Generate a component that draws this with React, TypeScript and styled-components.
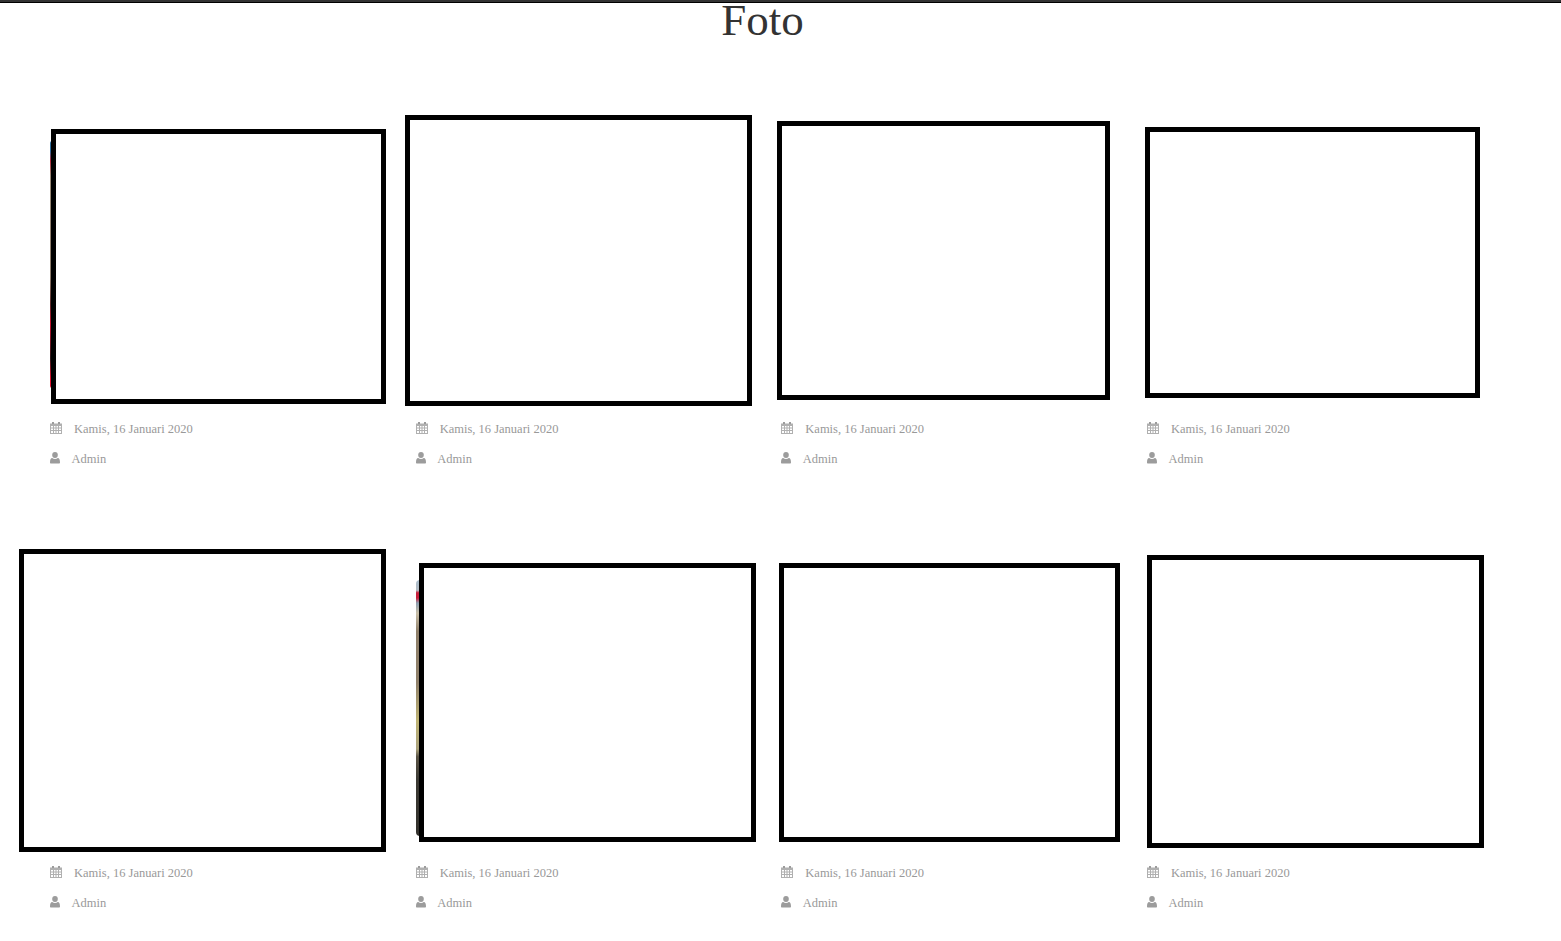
import { createGlobalStyle, styled } from 'styled-components'

const GlobalStyle = createGlobalStyle`
  html, body {
    margin: 0;
    padding: 0;
    background: #fff;
    font-family: "Liberation Serif", "Times New Roman", serif;
  }
`

const TopBar = styled.div`
  height: 2px;
  background: #333;
  border-bottom: 1px solid #000;
`

const Title = styled.h1`
  width: 1525px;
  height: 37px;
  margin: 0;
  font-size: 45px;
  font-weight: 400;
  line-height: 35px;
  text-align: center;
  color: #333;
`

const Gallery = styled.div`
  display: grid;
  grid-template-columns: repeat(4, 365.67px);
  width: 1463px;
  margin-left: 35px;
  padding-top: 75px;
  row-gap: 76px;
`

const Card = styled.article`
  padding: 0 15px;
`

const Slot = styled.div<{ $h: number }>`
  position: relative;
  display: flow-root;
  height: ${(p) => p.$h}px;
`

const Frame = styled.div<{ $w: number; $h: number; $left: number; $top: number }>`
  position: relative;
  box-sizing: border-box;
  width: ${(p) => p.$w}px;
  height: ${(p) => p.$h}px;
  margin-left: ${(p) => p.$left}px;
  margin-top: ${(p) => p.$top}px;
  border: 5px solid #000;
  background: #fff;
`

const Sliver = styled.div<{ $top: number; $w: number; $h: number; $colors: string }>`
  position: absolute;
  left: 0;
  top: ${(p) => p.$top}px;
  width: ${(p) => p.$w}px;
  height: ${(p) => p.$h}px;
  border-radius: 6px 0 0 6px;
  background: linear-gradient(to bottom, ${(p) => p.$colors});
`

const Meta = styled.div`
  display: flex;
  align-items: center;
  height: 30px;
  font-size: 12.5px;
  color: #999;
`

const MetaText = styled.span`
  padding-top: 2px;
`

const MetaIcon = styled.svg<{ $gap: number; $w: number }>`
  flex: none;
  width: ${(p) => p.$w}px;
  height: 12px;
  margin-right: ${(p) => p.$gap}px;
  fill: #9c9c9c;
`

function CalendarIcon() {
  return (
    <MetaIcon $w={12} $gap={12} viewBox="0 0 12 12">
      <path d="M2 0h2v2H2zM8 0h2v2H8z" />
      <path
        fillRule="evenodd"
        opacity="0.8"
        d="M0 1.500h12V12H0zM1 4v1.500h2V4zm3 0v1.500h1.500V4zm2.500 0v1.500H8V4zM9 4v1.500h2V4zM1 6.500V8h2V6.500zm3 0V8h1.500V6.500zm2.500 0V8H8V6.500zm2.500 0V8h2V6.500zM1 9v2h2V9zm3 0v2h1.500V9zm2.500 0v2H8V9zM9 9v2h2V9z"
      />
    </MetaIcon>
  )
}

function UserIcon() {
  return (
    <MetaIcon $w={10} $gap={11.5} viewBox="0 0 10 12">
      <ellipse cx="5" cy="3" rx="2.800" ry="3" />
      <path d="M1 11.500c-.6 0-1-.4-1-1 0-2.500.6-4.500 2.300-4.500.7.600 1.600 1 2.700 1s2-.4 2.700-1c1.700 0 2.300 2 2.300 4.500 0 .6-.4 1-1 1z" />
    </MetaIcon>
  )
}

const sliverA = '#2f6f9e 0%, #2f6f9e 4%, #b3283c 8%, #9a8a78 14%, #8a7a6a 55%, #5a2a2a 66%, #c8102e 74%, #2a1a1a 88%, #e0102e 96%, #e0102e 100%'
const sliverB = '#a9bccb 0%, #b4bcc4 4%, #c8203c 5%, #c8203c 7%, #8d9fb0 9%, #c9bfa8 13%, #8f806a 20%, #8f806a 40%, #bfb474 55%, #aaa27c 66%, #5a5446 69%, #3c3a34 78%, #33312c 100%'

const cards = [
  { slot: 298, w: 335, h: 275, left: 1, top: 14, sliver: { top: 26, w: 2, h: 247, colors: sliverA } },
  { slot: 298, w: 347, h: 291, left: -11, top: 0 },
  { slot: 298, w: 333, h: 279, left: -4, top: 6 },
  { slot: 298, w: 335, h: 271, left: -2, top: 12 },
  { slot: 308, w: 367, h: 303, left: -31, top: 0 },
  { slot: 308, w: 337, h: 279, left: 3, top: 14, sliver: { top: 31, w: 4, h: 256, colors: sliverB } },
  { slot: 308, w: 341, h: 279, left: -2, top: 14 },
  { slot: 308, w: 337, h: 293, left: 0, top: 6 },
]

export default function App() {
  return (
    <>
      <GlobalStyle />
      <TopBar />
      <Title>Foto</Title>
      <Gallery>
        {cards.map((card, i) => (
          <Card key={i}>
            <Slot $h={card.slot}>
              {card.sliver && (
                <Sliver
                  $top={card.sliver.top}
                  $w={card.sliver.w}
                  $h={card.sliver.h}
                  $colors={card.sliver.colors}
                />
              )}
              <Frame $w={card.w} $h={card.h} $left={card.left} $top={card.top} />
            </Slot>
            <Meta>
              <CalendarIcon />
              <MetaText>Kamis, 16 Januari 2020</MetaText>
            </Meta>
            <Meta>
              <UserIcon />
              <MetaText>Admin</MetaText>
            </Meta>
          </Card>
        ))}
      </Gallery>
    </>
  )
}
